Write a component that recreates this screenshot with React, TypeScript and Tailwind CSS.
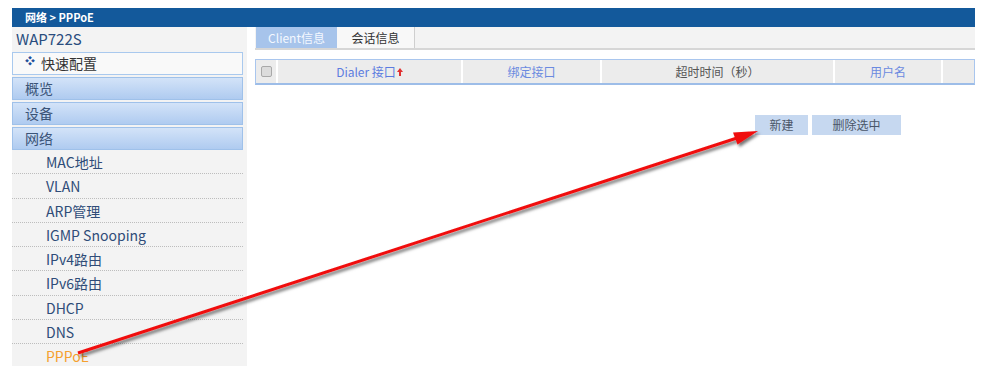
import React from 'react';

const subItems = ['MAC地址', 'VLAN', 'ARP管理', 'IGMP Snooping', 'IPv4路由', 'IPv6路由', 'DHCP', 'DNS'];

const font = { fontFamily: '"Noto Sans CJK SC", "Noto Sans", sans-serif' };

function GroupHeader({ label }: { label: string }) {
    return (
        <div className="mr-1 mt-[2px] h-[23px] border border-[#9fc1ea] bg-gradient-to-b from-[#d3e3f8] to-[#afcbf0] pl-3 text-[14px] leading-[21px] text-[#3b5478]">
            {label}
        </div>
    );
}

export default function App() {
    return (
        <div className="relative h-[366px] w-[999px] overflow-hidden bg-white" style={font}>
            <div className="pl-3 pr-6 pt-2">
                {/* breadcrumb bar */}
                <div className="h-[19px] bg-[#13599b] pl-[13px] text-[11px] font-bold leading-[19px] text-white">
                    网络 &gt; PPPoE
                </div>

                <div className="flex gap-2">
                    {/* sidebar */}
                    <div className="h-[340px] w-[235px] shrink-0 bg-[#f3f3f3]">
                        <div className="h-[24px] pl-1 text-[15px] leading-[24px] text-[#2a4d7e]">WAP722S</div>
                        <div className="mr-1 mt-px flex h-[23px] items-center border border-[#a9c9ee] bg-[#f9f9f9] pl-3 text-[14px] text-[#333]">
                            <span className="mr-[6px] -mt-[6px] text-[10px] text-[#1f4f9a]">❖</span>
                            快速配置
                        </div>
                        <GroupHeader label="概览" />
                        <GroupHeader label="设备" />
                        <GroupHeader label="网络" />
                        <div className="mr-1">
                            {subItems.map((s) => (
                                <div
                                    key={s}
                                    className="h-[24.3px] border-b border-dotted border-[#bdbdbd] pl-[34px] text-[14px] leading-[24px] text-[#2f4c78]"
                                >
                                    {s}
                                </div>
                            ))}
                            <div className="h-[24px] pl-[34px] text-[14px] leading-[24px] text-[#f5a02e]">PPPoE</div>
                        </div>
                    </div>

                    {/* main */}
                    <div className="flex-1">
                        <div className="flex h-[23px] border-b-2 border-[#d6d6d6] bg-[#f3f3f3]">
                            <div className="ml-px w-[81px] bg-[#a7c4eb] text-center text-[12px] leading-[21px] text-[#f4f8ff]">Client信息</div>
                            <div className="w-[78px] border-r border-[#cfcfcf] bg-[#f8f8f8] text-center text-[12px] leading-[21px] text-[#333]">会话信息</div>
                        </div>

                        <div className="mt-[9px] flex h-[26px] border border-b-2 border-[#a9c6ee] border-b-[#9dbde8] bg-[#ececec] text-[12px] leading-[24px]">
                            <div className="flex w-[22px] items-center justify-center border-r-2 border-white">
                                <div className="h-[11px] w-[11px] rounded-[2px] border border-[#a9a9a9] bg-[#dcdcdc]" />
                            </div>
                            <div className="flex w-[185px] items-center justify-center border-r-2 border-white text-[#5c7ce0]">
                                Dialer 接口
                                <svg width="6" height="8" viewBox="0 0 6 8" className="ml-px">
                                    <path d="M3 0 L6 4 L4 4 L4 8 L2 8 L2 4 L0 4 Z" fill="#e03030" />
                                </svg>
                            </div>
                            <div className="w-[139px] border-r-2 border-white text-center text-[#6b8ae0]">绑定接口</div>
                            <div className="w-[233px] border-r-2 border-white text-center text-[#555]">超时时间（秒）</div>
                            <div className="w-[108px] border-r-2 border-white text-center text-[#6b8ae0]">用户名</div>
                            <div className="flex-1" />
                        </div>

                        <div className="mt-[30px] flex gap-1 pl-[500px]">
                            <div className="h-[20px] w-[53px] bg-[#c6d8f0] text-center text-[12px] leading-[20px] text-[#4a5668]">新建</div>
                            <div className="h-[20px] w-[89px] bg-[#c6d8f0] text-center text-[12px] leading-[20px] text-[#4a5668]">删除选中</div>
                        </div>
                    </div>
                </div>
            </div>

            {/* annotation arrow */}
            <svg className="pointer-events-none absolute left-0 top-0" width="999" height="366">
                <defs>
                    <filter id="sh" x="-10%" y="-10%" width="120%" height="130%">
                        <feDropShadow dx="2" dy="2.5" stdDeviation="1.4" floodColor="#000" floodOpacity="0.55" />
                    </filter>
                </defs>
                <g filter="url(#sh)">
                    <line x1="78" y1="353" x2="737" y2="138" stroke="#f01010" strokeWidth="3" />
                    <polygon points="758,131 733,132.5 737.5,144.5" fill="#f01010" />
                </g>
            </svg>
        </div>
    );
}
